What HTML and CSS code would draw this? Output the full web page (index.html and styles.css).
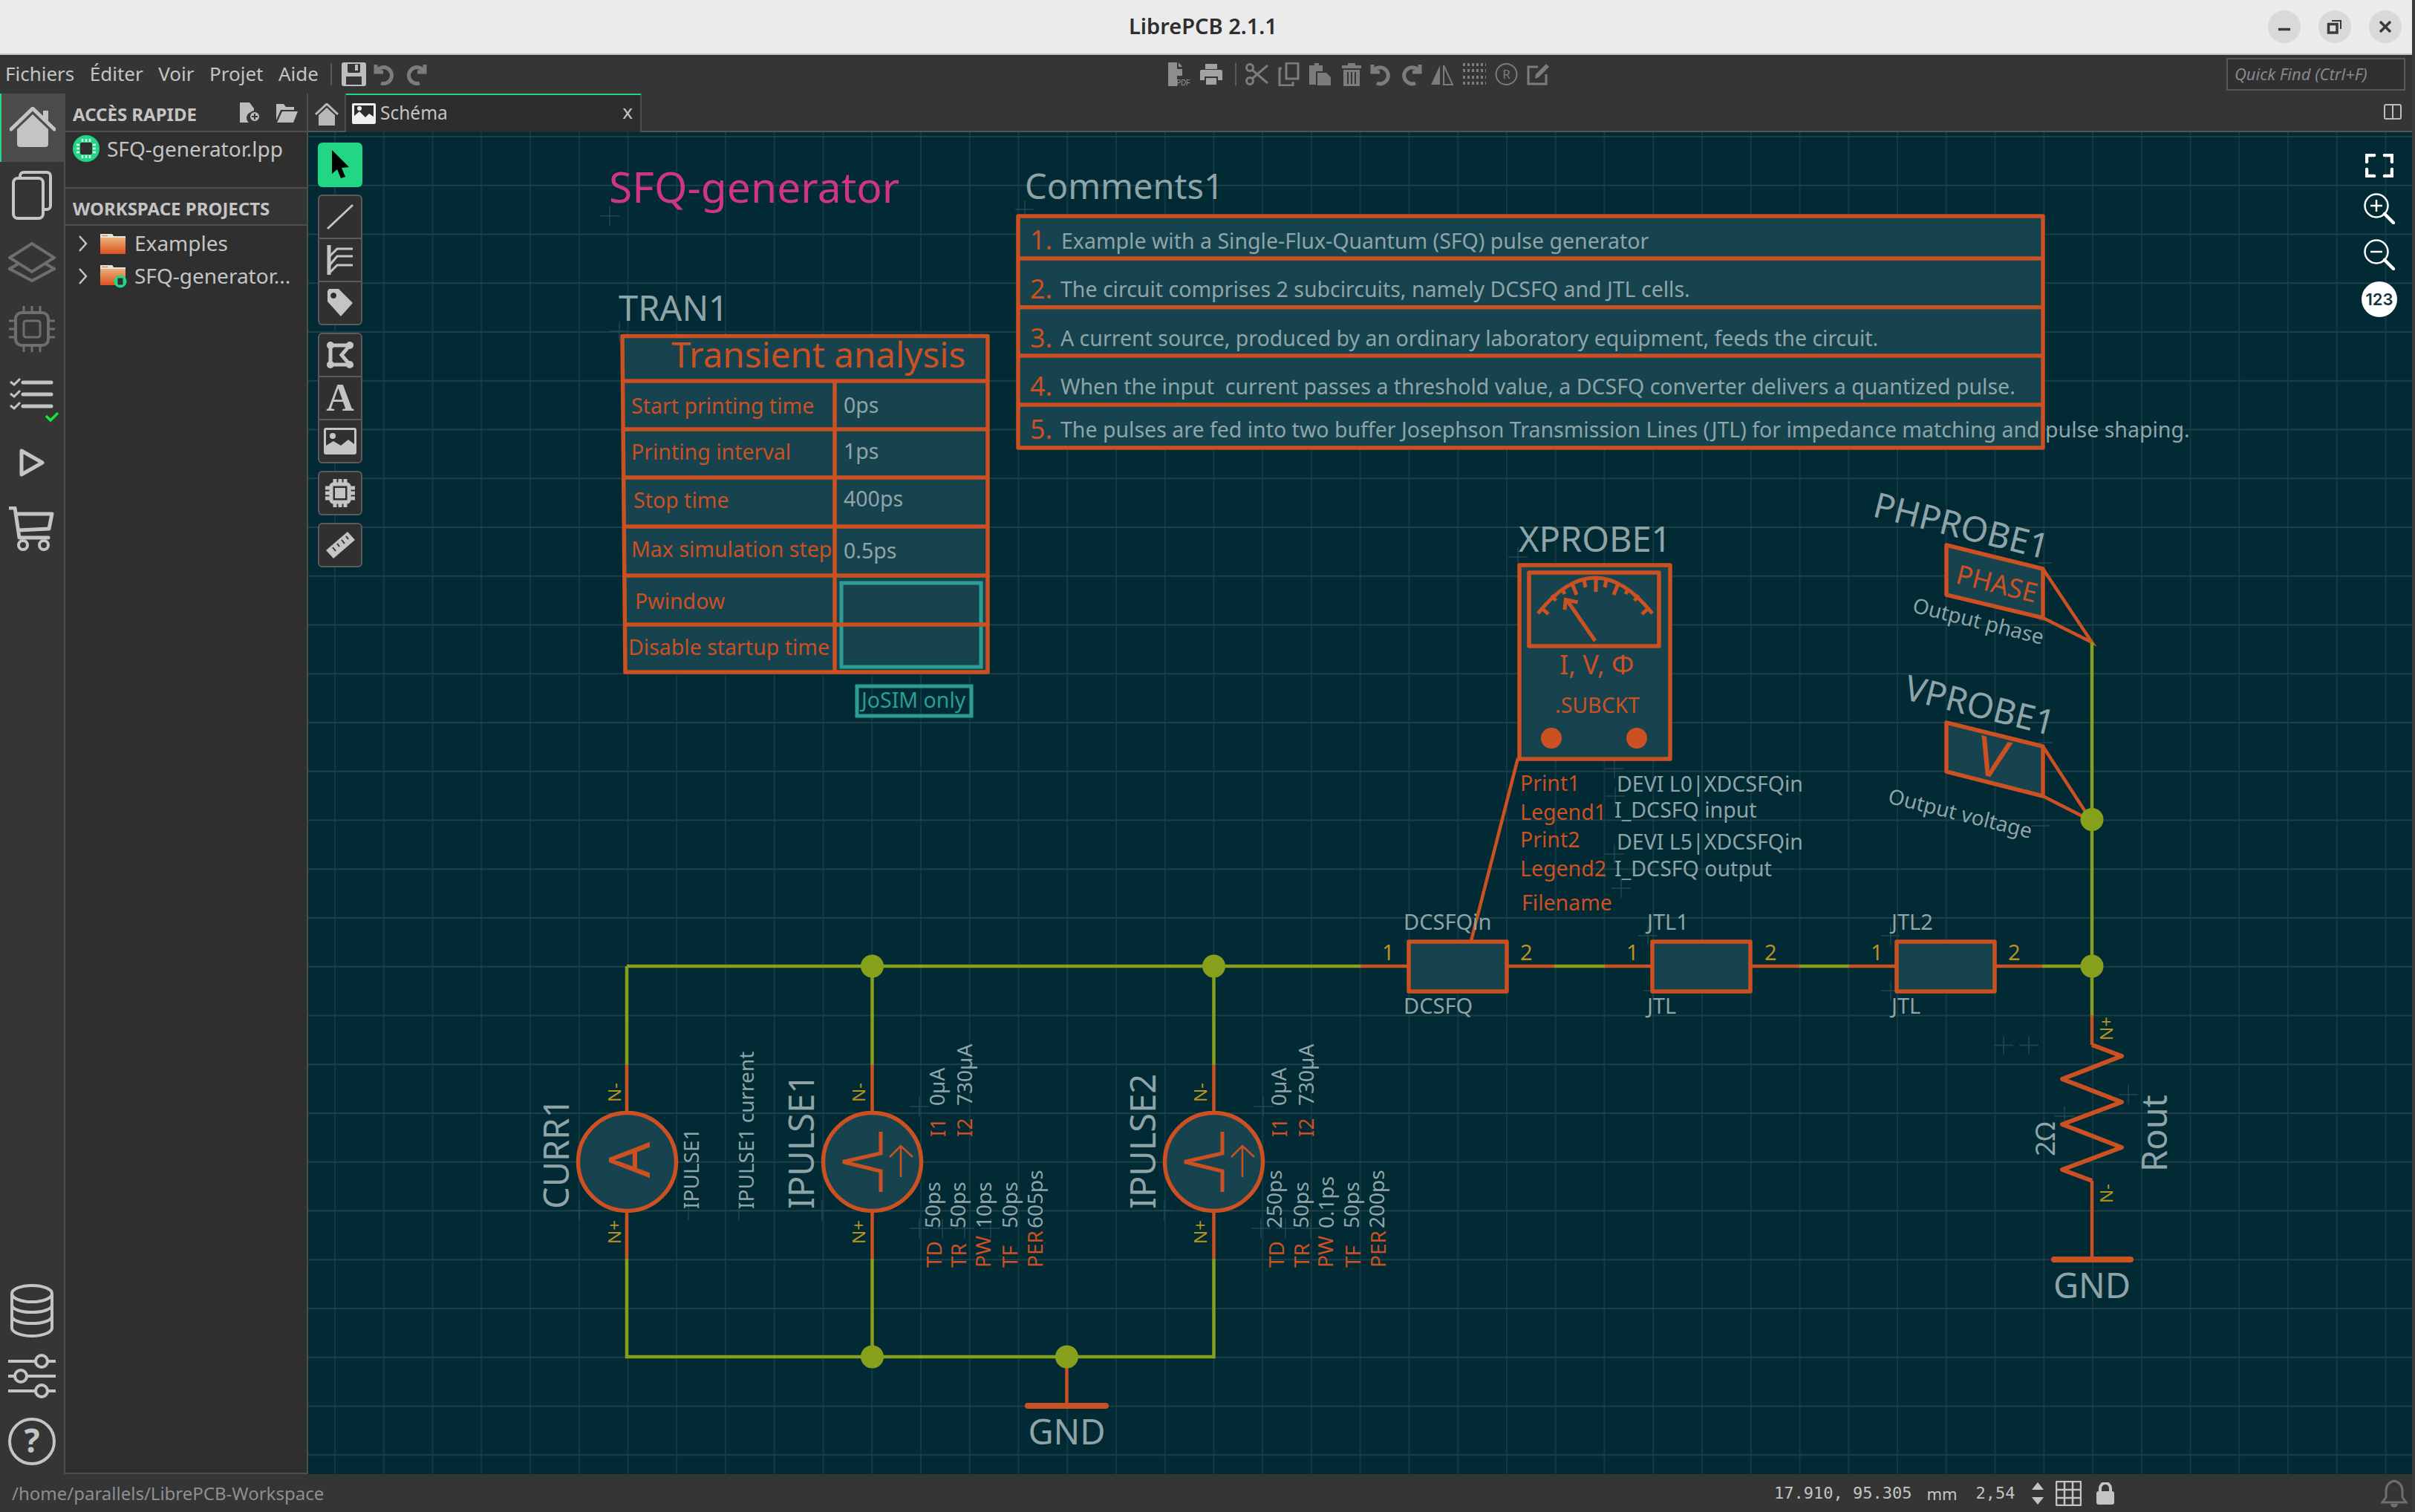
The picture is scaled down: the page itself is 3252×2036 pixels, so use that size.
FILE: index.html
```html
<!DOCTYPE html>
<html lang="fr">
<head>
<meta charset="utf-8">
<title>LibrePCB 2.1.1</title>
<link rel="stylesheet" href="styles.css">
</head>
<body>
<div class="app">
  <header class="titlebar">
    <span class="title">LibrePCB 2.1.1</span>
    <div class="winbtns">
      <span class="winbtn"><svg width="22" height="22" viewBox="0 0 22 22"><path d="M3 14.5H19" class="wb"/></svg></span>
      <span class="winbtn"><svg width="24" height="24" viewBox="0 0 24 24"><path d="M3.5 8.5H15V20H3.5Z" class="wb"/><path d="M8 4H20V15" class="wb thin"/></svg></span>
      <span class="winbtn"><svg width="24" height="24" viewBox="0 0 24 24"><path d="M5 5L19 19M19 5L5 19" class="wb"/></svg></span>
    </div>
  </header>

  <nav class="menubar">
    <div class="menus">
      <span>Fichiers</span><span>Éditer</span><span>Voir</span><span>Projet</span><span>Aide</span>
    </div>
    <i class="sep sep-a"></i>
    <div class="tb tb-left">
      <svg class="lit" width="33" height="32" viewBox="0 0 33 32"><path fill-rule="evenodd" d="M3 0H30a3 3 0 0 1 3 3V29a3 3 0 0 1-3 3H3a3 3 0 0 1-3-3V3a3 3 0 0 1 3-3ZM8 2V12a2 2 0 0 0 2 2H23a2 2 0 0 0 2-2V2ZM18 3V11H22V3ZM6 19V30H27V19Z"/></svg>
      <svg class="dim" width="31" height="32" viewBox="0 0 31 32"><path d="M3 3V13H13M4 12A11 11 0 1 1 10 28" class="st thick"/></svg>
      <svg class="dim" width="31" height="32" viewBox="0 0 31 32"><path d="M28 3V13H18M27 12A11 11 0 1 0 21 28" class="st thick"/></svg>
    </div>
    <div class="tb tb-center">
      <span class="pdfic"><svg class="lit2" width="32" height="32" viewBox="0 0 32 32"><path d="M1 0H13V9H20V18H13V32H1Z"/><path d="M15 0L20 6H15Z"/></svg><span class="pdf">PDF</span></span>
      <svg class="lit" width="32" height="32" viewBox="0 0 32 32"><path fill-rule="evenodd" d="M8 2H24V9H8ZM3 10H29a2 2 0 0 1 2 2V24H25V19H7V24H1V12a2 2 0 0 1 2-2ZM9 21H23V30H9Z"/></svg>
      <i class="sep sep-b"></i>
      <svg class="dim" width="32" height="32" viewBox="0 0 32 32"><circle cx="6" cy="7" r="4.500" class="st"/><circle cx="6" cy="25" r="4.500" class="st"/><path d="M9 10L30 28M9 22L30 4" class="st"/></svg>
      <svg class="dim" width="30" height="32" viewBox="0 0 30 32"><path d="M11 1H27V22H11Z M5 8H2V31H20V26" class="st"/></svg>
      <svg class="dim" width="32" height="32" viewBox="0 0 32 32"><path d="M1 4H8V1H14V4H19V12H10V30H1Z"/><path d="M12 14H24L30 20V31H12Z"/></svg>
      <svg class="dim" width="28" height="32" viewBox="0 0 28 32"><path fill-rule="evenodd" d="M1 4H9V1H19V4H27V8H1ZM3 10H25V32H3ZM8 13V29H10V13ZM13 13V29H15V13ZM18 13V29H20V13Z"/></svg>
      <svg class="dim" width="29" height="32" viewBox="0 0 29 32"><path d="M3 3V13H13M4 12A11 11 0 1 1 9 28" class="st thick"/></svg>
      <svg class="dim" width="29" height="32" viewBox="0 0 29 32"><path d="M26 3V13H16M25 12A11 11 0 1 0 20 28" class="st thick"/></svg>
      <svg class="dim" width="31" height="32" viewBox="0 0 31 32"><path d="M13 4V30H1Z"/><path d="M18 4V30H30Z" class="st thin"/></svg>
      <svg class="dim" width="33" height="32" viewBox="0 0 33 32"><path d="M1 3H32M1 11H32M1 20H32M1 28H32" class="dots"/></svg>
      <svg class="dim" width="31" height="32" viewBox="0 0 31 32"><circle cx="15.500" cy="16" r="14" class="st thin"/><text x="15.500" y="22" class="rtxt">R</text></svg>
      <svg class="dim" width="31" height="32" viewBox="0 0 31 32"><path d="M26 16V29H2V6H15" class="st"/><path d="M11 22L12 16L26 2L30 6L16 20Z"/></svg>
    </div>
    <div class="quickfind">Quick Find (Ctrl+F)</div>
  </nav>

  <div class="main">
    <aside class="rail">
      <div class="railitem active"><svg width="62" height="56" viewBox="0 0 62 56"><path d="M2 30L31 2L60 30" class="rs round"/><path d="M45 5H52V19L45 13Z" class="rf"/><path d="M10 30L31 10L52 30V50a4 4 0 0 1-4 4H14a4 4 0 0 1-4-4Z" class="rf"/></svg></div>
      <div class="railitem"><svg width="54" height="66" viewBox="0 0 54 66"><rect x="2" y="10" width="40" height="54" rx="6" class="rs"/><path d="M11 9V7a5 5 0 0 1 5-5H47a5 5 0 0 1 5 5V47a5 5 0 0 1-5 5H43" class="rs"/></svg></div>
      <div class="railitem dimrail"><svg width="64" height="54" viewBox="0 0 64 54"><path d="M32 2L62 21L32 40L2 21Z" class="rs"/><path d="M14 29L2 36L32 52L62 36L50 29" class="rs"/></svg></div>
      <div class="railitem dimrail"><svg width="64" height="64" viewBox="0 0 64 64"><rect x="10" y="10" width="44" height="44" rx="8" class="rs"/><rect x="21" y="21" width="22" height="22" rx="3" class="rs thinner"/><path d="M21 1V9M32 1V9M43 1V9M21 55V63M32 55V63M43 55V63M1 21H9M1 32H9M1 43H9M55 21H63M55 32H63M55 43H63" class="rs thinner"/></svg></div>
      <div class="railitem checks"><svg width="70" height="60" viewBox="0 0 70 60"><path d="M1 5L6 9L14 1M1 21L6 25L14 17M1 37L6 41L14 33" class="rs thinner"/><path d="M18 6H56M18 22H56M18 38H56" class="rs round"/><path d="M49 51L55 57L65 47" class="okc"/></svg></div>
      <div class="railitem"><svg width="34" height="38" viewBox="0 0 34 38"><path d="M3 3V35L31 19Z" class="rs round"/></svg></div>
      <div class="railitem"><svg width="62" height="62" viewBox="0 0 62 62"><path d="M1 2H8L14 42H53M10 10H58L54 30L13 32" class="rs round"/><circle cx="19" cy="52" r="6" class="rs"/><circle cx="47" cy="52" r="6" class="rs"/></svg></div>
      <div class="railspacer"></div>
      <div class="railitem low"><svg width="60" height="74" viewBox="0 0 60 74"><ellipse cx="30" cy="14" rx="27" ry="11" class="rs"/><path d="M3 14V60C3 66 15 71 30 71S57 66 57 60V14M3 29C3 35 15 39 30 39S57 35 57 29M3 44C3 50 15 54 30 54S57 50 57 44" class="rs"/></svg></div>
      <div class="railitem low"><svg width="64" height="60" viewBox="0 0 64 60"><path d="M0 10H36M54 10H64M0 30H8M26 30H64M0 50H36M54 50H64" class="rs"/><circle cx="45" cy="10" r="8" class="rs"/><circle cx="17" cy="30" r="8" class="rs"/><circle cx="45" cy="50" r="8" class="rs"/></svg></div>
      <div class="railitem low"><svg width="64" height="64" viewBox="0 0 64 64"><circle cx="32" cy="32" r="30" class="rs"/><text x="32" y="47" class="qm">?</text></svg></div>
    </aside>

    <section class="panel">
      <div class="panelhead first">
        <span>ACCÈS RAPIDE</span>
        <svg class="phi" width="30" height="27" viewBox="0 0 30 27"><path d="M1 0H14L20 8V13A8 8 0 0 0 13 27H1Z"/><circle cx="21" cy="19" r="7" class="cut"/><path d="M21 15V23M17 19H25" class="cutl"/></svg>
        <svg class="phi" width="30" height="27" viewBox="0 0 30 27"><path d="M1 2H11L14 6H25V10H7L1 24Z"/><path d="M9 12H30L24 27H2Z"/></svg>
      </div>
      <div class="filerow">
        <svg width="36" height="36" viewBox="0 0 36 36"><circle cx="18" cy="18" r="18" class="logo"/><rect x="10" y="10" width="16" height="16" rx="2" class="logoin"/><path d="M13 5V9M18 5V9M23 5V9M13 27V31M18 27V31M23 27V31M5 13H9M5 18H9M5 23H9M27 13H31M27 18H31M27 23H31" class="logopin"/></svg>
        <span>SFQ-generator.lpp</span>
      </div>
      <div class="panelhead second"><span>WORKSPACE PROJECTS</span></div>
      <div class="tree">
        <div class="treerow">
          <svg width="14" height="22" viewBox="0 0 14 22"><path d="M2 1L11 11L2 21" class="chev"/></svg>
          <svg width="34" height="28" viewBox="0 0 34 28"><use href="#folder"/></svg>
          <span>Examples</span>
        </div>
        <div class="treerow">
          <svg width="14" height="22" viewBox="0 0 14 22"><path d="M2 1L11 11L2 21" class="chev"/></svg>
          <svg width="36" height="32" viewBox="0 0 36 32"><use href="#folder"/><circle cx="27" cy="23" r="8.500" class="logo"/><rect x="23.500" y="18.500" width="7" height="9" rx="1" class="logoin"/></svg>
          <span class="shift">SFQ-generator...</span>
        </div>
      </div>
      <svg class="defs" width="0" height="0"><defs>
        <linearGradient id="fg" x1="0" y1="0" x2="0" y2="1"><stop offset="0" stop-color="#f2c48c"/><stop offset="1" stop-color="#d9521f"/></linearGradient>
        <g id="folder"><path d="M0 1H16L18 4H34V28H0Z" fill="url(#fg)"/><path d="M0 1H16L18 4H34V6H0Z" fill="#e8e3da"/><path d="M2 3H10V4H2Z" fill="#e2762e"/></g>
      </defs></svg>
    </section>

    <section class="workspace">
      <div class="tabbar">
        <div class="hometab"><svg width="32" height="30" viewBox="0 0 32 30"><path d="M1 15L16 1L31 15" class="tabstroke"/><path d="M5 16L16 6L27 16V30H5Z" class="tabfill"/></svg></div>
        <div class="tab">
          <svg width="32" height="28" viewBox="0 0 32 28"><path fill-rule="evenodd" class="tabwhite" d="M2 0H30a2 2 0 0 1 2 2V26a2 2 0 0 1-2 2H2a2 2 0 0 1-2-2V2a2 2 0 0 1 2-2ZM3 3V17L10 11L18 19L23 14L29 18V3Z"/><circle cx="10" cy="7" r="3" class="tabwhite"/></svg>
          <span class="tabname">Schéma</span>
          <span class="tabclose">x</span>
        </div>
        <svg class="split" width="24" height="21" viewBox="0 0 24 21"><rect x="1" y="1" width="22" height="19" rx="2" class="splitl"/><path d="M12 1V20" class="splitl"/></svg>
      </div>

      <div class="canvas">
        <svg class="sheet" width="2833" height="1807" viewBox="415 178 2833 1807">
          <path class="cross" d="M808 290.700H834M821 278V304M821 446H847M834 433V459M1124 527H1150M1137 514V540M1124 588H1150M1137 575V601M1124 653.500H1150M1137 641V666M1124 723H1150M1137 710V736M1124 785H1150M1137 772V798M1124 851H1150M1137 838V864M1367 282H1392M1380 270V295M1416 304H1442M1429 291V317M1416 370H1442M1429 357V383M1416 435H1442M1429 422V448M1416 501H1442M1429 488V514M1416 559H1442M1429 546V572M2031 750H2057M2044 737V763M2161 1035H2187M2174 1022V1048M2162 1072H2188M2175 1060V1085M2161 1150H2187M2174 1137V1163M2170 1196H2196M2183 1183V1209M2206 1260H2232M2219 1247V1273M2533 1260H2558M2546 1247V1273M2213 1334H2239M2226 1321V1347M2533 1334H2558M2546 1321V1347M2685 1407.500H2711M2698 1395V1420M2719 1407.500H2745M2732 1395V1420M2853 1474H2879M2866 1461V1487M2767 1503H2793M2780 1490V1516M767 1630H793M780 1617V1643M914 1630H940M927 1617V1643M982 1630H1008M995 1617V1643M1094 1630H1120M1107 1617V1643M1555 1630H1581M1568 1617V1643M1225 1654H1251M1238 1641V1667M1256 1654H1282M1269 1641V1667M1286 1654H1312M1299 1641V1667M1321 1654H1347M1334 1641V1667M1225 1490H1251M1238 1477V1503M1688 1490H1714M1701 1477V1503M1685 1654H1711M1698 1641V1667M1718 1654H1744M1731 1641V1667M1752 1654H1778M1765 1641V1667M2745 758H2763M2745 835H2763M2745 1000H2763M2735 1112H2760"/>

          <text x="820" y="273" class="t pink f56">SFQ-generator</text>
          <text x="1380" y="268" class="t g f47">Comments1</text>

          <rect x="1371" y="291" width="1380" height="312" class="sym"/>
          <path d="M1371 348H2751M1371 413.700H2751M1371 479H2751M1371 545H2751" class="sym"/>
          <text x="1387" y="336" class="t o f36">1.</text>
          <text x="1387" y="402" class="t o f36">2.</text>
          <text x="1387" y="468" class="t o f36">3.</text>
          <text x="1387" y="533" class="t o f36">4.</text>
          <text x="1387" y="591" class="t o f36">5.</text>
          <text x="1429" y="335" class="t g f29">Example with a Single-Flux-Quantum (SFQ) pulse generator</text>
          <text x="1428" y="400" class="t g f29">The circuit comprises 2 subcircuits, namely DCSFQ and JTL cells.</text>
          <text x="1428" y="466" class="t g f29">A current source, produced by an ordinary laboratory equipment, feeds the circuit.</text>
          <text x="1428" y="531" class="t g f29 pre">When the input  current passes a threshold value, a DCSFQ converter delivers a quantized pulse.</text>
          <text x="1428" y="589" class="t g f29">The pulses are fed into two buffer Josephson Transmission Lines (JTL) for impedance matching and pulse shaping.</text>

          <text x="833" y="432" class="t g f46">TRAN1</text>
          <path d="M838 452.500H1330V905H842Z" class="sym"/>
          <rect x="1133" y="785" width="188" height="113" class="teal"/>
          <path d="M839 513H1330M840 578H1330M840 643H1330M841 709H1330M841 775H1330M842 841H1330M1124 513V905" class="sym"/>
          <text x="904" y="495" class="t o f49">Transient analysis</text>
          <text x="850" y="557" class="t o f30">Start printing time</text>
          <text x="850" y="619" class="t o f30">Printing interval</text>
          <text x="853" y="684" class="t o f30">Stop time</text>
          <text x="850" y="750" class="t o f30">Max simulation step</text>
          <text x="855" y="820" class="t o f30">Pwindow</text>
          <text x="846" y="882" class="t o f30">Disable startup time</text>
          <text x="1136" y="556" class="t g f30">0ps</text>
          <text x="1136" y="618" class="t g f30">1ps</text>
          <text x="1136" y="682" class="t g f30">400ps</text>
          <text x="1136" y="752" class="t g f30">0.5ps</text>
          <rect x="1154" y="924" width="154" height="40" class="tealbox"/>
          <text x="1160" y="953" class="t tl f30">JoSIM only</text>

          <text x="2045" y="743" class="t g f46">XPROBE1</text>
          <rect x="2046" y="761" width="203" height="261" class="sym"/>
          <rect x="2059" y="771" width="175" height="99" class="sym"/>
          <path d="M2071 826Q2148 730 2225 826M2149 779V797M2133 781l2 10M2117 786l6 15M2103 792l4 8M2090 801l5 8M2075 818l10 9M2163 781l-2 10M2179 786l-6 15M2193 792l-4 8M2206 801l-5 8M2221 818l-10 9M2148 863L2110 808M2107 821L2108.400 807.600L2124.600 811" class="thin-sym"/>
          <text x="2100" y="908" class="t o f36">I, V, Φ</text>
          <text x="2094" y="960" class="t o f29">.SUBCKT</text>
          <circle cx="2089" cy="994" r="14" class="dot"/>
          <circle cx="2204" cy="994" r="14" class="dot"/>
          <path d="M2044 1021L1981 1267" class="owire"/>
          <text x="2047" y="1065" class="t o f30">Print1</text>
          <text x="2047" y="1104" class="t o f30">Legend1</text>
          <text x="2047" y="1141" class="t o f30">Print2</text>
          <text x="2047" y="1180" class="t o f30">Legend2</text>
          <text x="2049" y="1226" class="t o f30">Filename</text>
          <text x="2177" y="1066" class="t g f30">DEVI L0|XDCSFQin</text>
          <text x="2174" y="1101" class="t g f30">I_DCSFQ input</text>
          <text x="2177" y="1144" class="t g f30">DEVI L5|XDCSFQin</text>
          <text x="2174" y="1180" class="t g f30">I_DCSFQ output</text>

          <text transform="translate(2520 695) rotate(14)" class="t g f46">PHPROBE1</text>
          <path d="M2621 734L2751 766V832L2621 801Z" class="sym"/>
          <path d="M2751 766L2817 865L2751 832" class="owire"/>
          <text transform="translate(2632 785) rotate(14)" class="t o f36">PHASE</text>
          <text transform="translate(2574 824) rotate(14)" class="t g f28">Output phase</text>
          <text transform="translate(2562 941) rotate(14)" class="t g f46">VPROBE1</text>
          <path d="M2621 973L2751 1005V1072L2621 1039Z" class="sym"/>
          <path d="M2751 1005L2812 1099M2751 1072L2812 1103" class="owire"/>
          <text transform="translate(2656 1040) rotate(14)" class="t o f60">V</text>
          <text transform="translate(2541 1081) rotate(14)" class="t g f28">Output voltage</text>

          <path d="M2817 865V1367M844 1301H1832M2093 1301H2161M2423 1301H2490M2750 1301H2817M844 1301V1434M844 1695V1827H1634.500V1695M1174.500 1301V1434M1634.500 1301V1434M1174.500 1695V1827M1436.500 1827V1840" class="wire"/>
          <path d="M1832 1301H1897M2030 1301H2093M2161 1301H2225M2357 1301H2423M2490 1301H2554M2687 1301H2750M2817 1367V1407M2817 1590V1695M844 1434V1497M844 1632V1695M1174.500 1434V1497M1174.500 1632V1695M1634.500 1434V1497M1634.500 1632V1695M1436.500 1840V1893" class="owire"/>

          <rect x="1897" y="1268" width="132" height="67" class="sym"/>
          <rect x="2225" y="1268" width="132" height="67" class="sym"/>
          <rect x="2554" y="1268" width="132" height="67" class="sym"/>
          <text x="1890" y="1252" class="t g f27">DCSFQin</text>
          <text x="1890" y="1365" class="t g f27">DCSFQ</text>
          <text x="2218" y="1252" class="t g f27">JTL1</text>
          <text x="2218" y="1365" class="t g f27">JTL</text>
          <text x="2547" y="1252" class="t g f27">JTL2</text>
          <text x="2547" y="1365" class="t g f27">JTL</text>
          <text x="1861" y="1293" class="t y f27">1</text>
          <text x="2047" y="1293" class="t y f27">2</text>
          <text x="2190" y="1293" class="t y f27">1</text>
          <text x="2376" y="1293" class="t y f27">2</text>
          <text x="2519" y="1293" class="t y f27">1</text>
          <text x="2704" y="1293" class="t y f27">2</text>

          <circle cx="2817" cy="1103.500" r="15.500" class="node"/>
          <circle cx="2817" cy="1301" r="15.500" class="node"/>
          <circle cx="1174.500" cy="1301" r="15.500" class="node"/>
          <circle cx="1634.500" cy="1301" r="15.500" class="node"/>
          <circle cx="1174.500" cy="1827" r="15.500" class="node"/>
          <circle cx="1436.500" cy="1827" r="15.500" class="node"/>

          <path d="M2817 1407L2857 1422L2777 1453L2857 1484L2777 1514L2857 1545L2777 1575L2817 1590" class="zig"/>
          <path d="M2766 1696H2869M1384 1893H1489" class="bar"/>
          <text x="2817" y="1748" class="t g f46 mid">GND</text>
          <text x="1436.500" y="1945" class="t g f46 mid">GND</text>
          <text transform="translate(2845 1401) rotate(-90)" class="t y f24">N+</text>
          <text transform="translate(2845 1620) rotate(-90)" class="t y f24">N-</text>
          <text transform="translate(2767 1557) rotate(-90)" class="t g f36">2Ω</text>
          <text transform="translate(2918 1578) rotate(-90)" class="t g f44">Rout</text>

          <circle cx="844.500" cy="1564.500" r="66" class="sym"/>
          <circle cx="1174.500" cy="1564.500" r="66" class="sym"/>
          <circle cx="1634.500" cy="1564.500" r="66" class="sym"/>
          <text transform="translate(875 1562) rotate(-90)" class="t o f76 mid">A</text>
          <path d="M1186 1524V1553L1135 1564.500L1186 1577V1605M1646 1524V1553L1595 1564.500L1646 1577V1605" class="pulse"/>
          <path d="M1213 1585V1543M1198 1558L1213 1543L1229 1558M1673 1585V1543M1658 1558L1673 1543L1689 1558" class="arrow"/>

          <text transform="translate(766 1628) rotate(-90)" class="t g f46">CURR1</text>
          <text transform="translate(1096 1628) rotate(-90)" class="t g f46">IPULSE1</text>
          <text transform="translate(1556 1628) rotate(-90)" class="t g f46">IPULSE2</text>
          <text transform="translate(941 1628) rotate(-90)" class="t g f28">IPULSE1</text>
          <text transform="translate(1015 1628) rotate(-90)" class="t g f28">IPULSE1 current</text>

          <text transform="translate(836 1484) rotate(-90)" class="t y f24">N-</text>
          <text transform="translate(836 1675) rotate(-90)" class="t y f24">N+</text>
          <text transform="translate(1165 1484) rotate(-90)" class="t y f24">N-</text>
          <text transform="translate(1165 1675) rotate(-90)" class="t y f24">N+</text>
          <text transform="translate(1625 1484) rotate(-90)" class="t y f24">N-</text>
          <text transform="translate(1625 1675) rotate(-90)" class="t y f24">N+</text>

          <text transform="translate(1273 1531) rotate(-90)" class="t o f28">I1</text>
          <text transform="translate(1309 1531) rotate(-90)" class="t o f28">I2</text>
          <text transform="translate(1272 1489) rotate(-90)" class="t g f28">0µA</text>
          <text transform="translate(1309 1489) rotate(-90)" class="t g f28">730µA</text>
          <text transform="translate(1268 1707) rotate(-90)" class="t o f28">TD</text>
          <text transform="translate(1301 1707) rotate(-90)" class="t o f28">TR</text>
          <text transform="translate(1334 1707) rotate(-90)" class="t o f28">PW</text>
          <text transform="translate(1370 1707) rotate(-90)" class="t o f28">TF</text>
          <text transform="translate(1404 1707) rotate(-90)" class="t o f28">PER</text>
          <text transform="translate(1266 1654) rotate(-90)" class="t g f28">50ps</text>
          <text transform="translate(1300 1654) rotate(-90)" class="t g f28">50ps</text>
          <text transform="translate(1335 1654) rotate(-90)" class="t g f28">10ps</text>
          <text transform="translate(1370 1654) rotate(-90)" class="t g f28">50ps</text>
          <text transform="translate(1404 1654) rotate(-90)" class="t g f28">605ps</text>

          <text transform="translate(1733 1531) rotate(-90)" class="t o f28">I1</text>
          <text transform="translate(1769 1531) rotate(-90)" class="t o f28">I2</text>
          <text transform="translate(1732 1489) rotate(-90)" class="t g f28">0µA</text>
          <text transform="translate(1769 1489) rotate(-90)" class="t g f28">730µA</text>
          <text transform="translate(1729 1707) rotate(-90)" class="t o f28">TD</text>
          <text transform="translate(1763 1707) rotate(-90)" class="t o f28">TR</text>
          <text transform="translate(1795 1707) rotate(-90)" class="t o f28">PW</text>
          <text transform="translate(1832 1707) rotate(-90)" class="t o f28">TF</text>
          <text transform="translate(1866 1707) rotate(-90)" class="t o f28">PER</text>
          <text transform="translate(1726 1654) rotate(-90)" class="t g f28">250ps</text>
          <text transform="translate(1762 1654) rotate(-90)" class="t g f28">50ps</text>
          <text transform="translate(1796 1654) rotate(-90)" class="t g f28">0.1ps</text>
          <text transform="translate(1830 1654) rotate(-90)" class="t g f28">50ps</text>
          <text transform="translate(1864 1654) rotate(-90)" class="t g f28">200ps</text>
        </svg>

        <div class="tools">
          <div class="toolgroup green"><div class="tool"><svg width="26" height="40" viewBox="0 0 26 40"><path d="M2 0L25 23L15 24L20 36L14 38L9 26L2 32Z" class="blk"/></svg></div></div>
          <div class="toolgroup">
            <div class="tool"><svg width="36" height="36" viewBox="0 0 36 36"><path d="M1 34L35 2" class="ts"/></svg></div>
            <div class="tool"><svg width="36" height="40" viewBox="0 0 36 40"><path d="M3 0V40" class="ts wide"/><path d="M3 16L14 5H35M3 28L14 15H35M3 38L14 27H35" class="ts"/></svg></div>
            <div class="tool"><svg width="36" height="38" viewBox="0 0 36 38"><path fill-rule="evenodd" class="tf" d="M3 0H16L35 19L19 37L1 17V3ZM9 5a4 4 0 1 0 .100 0Z"/></svg></div>
          </div>
          <div class="toolgroup">
            <div class="tool"><svg width="38" height="38" viewBox="0 0 38 38"><path d="M6 6H32L21 19L32 32H6Z" class="ts wide"/><circle cx="6" cy="6" r="5" class="tf"/><circle cx="32" cy="6" r="5" class="tf"/><circle cx="6" cy="32" r="5" class="tf"/><circle cx="32" cy="32" r="5" class="tf"/></svg></div>
            <div class="tool"><span class="ta">A</span></div>
            <div class="tool"><svg width="44" height="36" viewBox="0 0 44 36"><path fill-rule="evenodd" class="tf" d="M3 0H41a3 3 0 0 1 3 3V33a3 3 0 0 1-3 3H3a3 3 0 0 1-3-3V3a3 3 0 0 1 3-3ZM3 3V24L13 18L23 24L33 16L41 22V3Z"/><circle cx="12" cy="11" r="4" class="tf"/></svg></div>
          </div>
          <div class="toolgroup"><div class="tool"><svg width="42" height="40" viewBox="0 0 42 40"><rect x="9" y="8" width="24" height="24" rx="3" class="ts wide"/><rect x="14" y="13" width="14" height="14" class="tf"/><path d="M14 1V7M21 1V7M28 1V7M14 33V39M21 33V39M28 33V39M1 13H8M1 20H8M1 27H8M34 13H41M34 20H41M34 27H41" class="ts wide"/></svg></div></div>
          <div class="toolgroup"><div class="tool"><svg width="42" height="38" viewBox="0 0 42 38"><path class="tf" d="M2 26L31 1L41 12L12 37Z"/><path d="M11 22L15 27M17 17L20 21M23 12L27 17M29 7L32 11" class="rulecut"/></svg></div></div>
        </div>

        <div class="viewctl">
          <svg width="38" height="32" viewBox="0 0 38 32"><path d="M2 11V2H12M26 2H36V11M2 21V30H12M26 30H36V21" class="vw"/></svg>
          <svg width="42" height="42" viewBox="0 0 42 42"><circle cx="17" cy="17" r="15.500" class="vt"/><path d="M9 17H25M17 9V25" class="vt"/><path d="M28 28L40 40" class="vw"/></svg>
          <svg width="42" height="42" viewBox="0 0 42 42"><circle cx="17" cy="17" r="15.500" class="vt"/><path d="M9 17H25" class="vt"/><path d="M28 28L40 40" class="vw"/></svg>
          <span class="badge">123</span>
        </div>
      </div>
    </section>
  </div>

  <footer class="statusbar">
    <span class="path">/home/parallels/LibrePCB-Workspace</span>
    <span class="coord">17.910, 95.305</span>
    <span class="unit">mm</span>
    <span class="coord gridv">2,54</span>
    <svg class="updown" width="16" height="30" viewBox="0 0 16 30"><path d="M8 0L16 10H0ZM8 30L16 20H0Z" class="sf"/></svg>
    <svg class="gridic" width="35" height="34" viewBox="0 0 35 34"><rect x="1" y="1" width="33" height="32" rx="1" class="sl"/><path d="M12 1V33M23 1V33M1 12H34M1 23H34" class="sl"/></svg>
    <svg class="lock" width="26" height="30" viewBox="0 0 26 30"><path d="M6 13V8a7 7 0 0 1 14 0V13" class="sl thick"/><rect x="1" y="12" width="24" height="18" rx="3" class="sf"/></svg>
    <svg class="bell" width="36" height="38" viewBox="0 0 36 38"><path d="M18 2C10 4 7 10 7 16V24L2 31H34L29 24V16C29 10 26 4 18 2Z" class="bl"/><path d="M13 33a5 5 0 0 0 10 0Z" class="bf"/></svg>
  </footer>
</div>
</body>
</html>
```

FILE: styles.css
```css
* { box-sizing: border-box; }
html, body { margin: 0; padding: 0; height: 100%; background: #3c3c3c; overflow: hidden; }
body { font-family: "Noto Sans", sans-serif; color: #c4c4c4; }

.app { width: 3248px; height: 2036px; display: flex; flex-direction: column; background: #353535; }

/* title bar */
.titlebar { height: 74px; flex: none; background: #ebebeb; border-bottom: 2px solid #c4c4c4; display: flex; align-items: center; justify-content: center; position: relative; padding-bottom: 3px; }
.title { font-size: 29px; font-weight: 600; color: #2e2e2e; margin-right: 8px; }
.winbtns { position: absolute; right: 14px; top: 14px; display: flex; gap: 24px; }
.winbtn { width: 44px; height: 44px; border-radius: 50%; background: #d9d9d9; display: flex; align-items: center; justify-content: center; }
.wb { fill: none; stroke: #3a3a3a; stroke-width: 3.5; }
.wb.thin { stroke-width: 2; }

/* menu bar */
.menubar { height: 52px; flex: none; display: flex; align-items: center; padding-left: 7px; background: #353535; }
.menus { display: flex; gap: 20.5px; font-size: 26px; color: #c4c4c4; padding-bottom: 3px; }
.sep { display: block; width: 2px; height: 30px; background: #5c5c5c; flex: none; }
.sep-a { margin: 0 13px 0 16px; }
.sep-b { margin: 0 1px 0 4px; }
.tb { display: flex; align-items: center; }
.tb-left { gap: 10px; }
.tb-center { gap: 11.5px; margin-left: 997px; }
.lit { fill: #c0c0c0; }
.lit2 { fill: #8e8e8e; }
.dim { fill: #7c7c7c; }
.tb svg.lit { fill: #bdbdbd; }
.tb-center svg.lit { fill: #a2a2a2; }
.st { fill: none; stroke: #7c7c7c; stroke-width: 3; }
.st.thin { stroke-width: 2; }
.st.thick { stroke-width: 5; }
.dots { stroke: #7c7c7c; stroke-width: 4; stroke-dasharray: 3 3; fill: none; }
.pdfic { position: relative; display: block; width: 32px; height: 32px; flex: none; }
.pdfic svg { display: block; }
.pdf { position: absolute; left: 12px; bottom: -1px; font-family: "Liberation Sans", sans-serif; font-size: 11px; line-height: 12px; color: #9a9a9a; transform: scaleX(0.85); transform-origin: left bottom; }
.rtxt { font-size: 17px; text-anchor: middle; fill: #7c7c7c; }
.quickfind { margin-left: auto; margin-right: 9px; width: 241px; height: 44px; background: #303030; border: 2px solid #585858; font-size: 22px; font-style: italic; color: #85898e; padding-left: 9px; line-height: 38px; }

/* main row */
.main { flex: 1; min-height: 0; display: flex; }

.rail { width: 88px; flex: none; display: flex; flex-direction: column; background: #353535; border-right: 2px solid #4e4e4e; }
.railitem { height: 90px; flex: none; display: flex; align-items: center; justify-content: center; }
.railitem.active { height: 92px; background: #4c4c4c; border-left: 2px solid #22d685; }
.railitem.checks { padding: 12px 0 0 10px; }
.railitem.low { height: 88px; }
.railspacer { flex: 1; }
.rs { fill: none; stroke: #c4c4c4; stroke-width: 4; }
.rs.round { stroke-linecap: round; stroke-linejoin: round; stroke-width: 5; }
.rs.thinner { stroke-width: 3; }
.rf { fill: #c4c4c4; }
.dimrail .rs { stroke: #6e6e6e; }
.okc { fill: none; stroke: #14e43c; stroke-width: 3.5; }
.qm { font-size: 44px; font-weight: 700; text-anchor: middle; fill: #c4c4c4; }

.panel { width: 325px; flex: none; background: #2f2f2f; display: flex; flex-direction: column; border-bottom: 2px solid #4e4e4e; }
.panelhead { display: flex; align-items: center; background: #353535; padding-left: 10px; font-size: 24px; font-weight: 700; color: #c4c4c4; flex: none; border-bottom: 2px solid #4e4e4e; }
.panelhead.first { height: 52px; }
.panelhead.first span { margin-right: auto; padding-top: 4px; }
.panelhead.first svg { margin-right: 19px; }
.panelhead.first svg + svg { margin-right: 12px; }
.panelhead.second { height: 52px; border-top: 2px solid #4e4e4e; padding-top: 4px; }
.phi { fill: #bdbdbd; }
.cut { fill: #bdbdbd; stroke: #353535; stroke-width: 2; }
.cutl { stroke: #353535; stroke-width: 2; fill: none; }
.filerow { height: 74px; flex: none; display: flex; align-items: flex-start; gap: 10px; padding: 4px 0 0 10px; font-size: 28px; line-height: 36px; color: #c4c4c4; }
.logo { fill: #22d685; }
.logoin { fill: #2f2f2f; }
.logopin { stroke: #e8f5ee; stroke-width: 2.5; fill: none; }
.tree { padding: 2px 0 0 17px; display: flex; flex-direction: column; font-size: 28px; color: #c4c4c4; }
.treerow { height: 44px; display: flex; align-items: center; gap: 16px; }
.treerow span { margin-left: -4px; padding-bottom: 2px; }
.treerow span.shift { margin-left: -6px; }
.chev { fill: none; stroke: #c4c4c4; stroke-width: 2.5; }
.defs { position: absolute; }

.workspace { flex: 1; min-width: 0; display: flex; flex-direction: column; border-left: 2px solid #4e4e4e; }
.tabbar { height: 52px; flex: none; display: flex; background: #353535; border-bottom: 2px solid #555; align-items: stretch; }
.hometab { width: 51px; display: flex; align-items: center; justify-content: center; border-right: 2px solid #4e4e4e; padding-top: 6px; }
.tabstroke { fill: none; stroke: #b9b9b9; stroke-width: 3; }
.tabfill { fill: #b9b9b9; }
.tab { width: 398px; height: 52px; background: #2d2d2d; border-top: 2px solid #22d685; border-right: 2px solid #4e4e4e; display: flex; align-items: center; padding: 0 10px 0 8px; gap: 6px; }
.tabwhite { fill: #f0f0f0; }
.tabname { font-size: 24.5px; color: #c4c4c4; padding-bottom: 3px; }
.tabclose { margin-left: auto; font-size: 26px; color: #c4c4c4; padding-bottom: 6px; }
.split { margin: 14px 14px 0 auto; }
.splitl { fill: none; stroke: #bdbdbd; stroke-width: 2; }

.canvas { flex: 1; min-height: 0; position: relative; overflow: hidden; background-color: #012a35;
  background-image: linear-gradient(#1d3f48 2px, transparent 2px), linear-gradient(90deg, #143943 2px, transparent 2px);
  background-size: 65.75px 65.75px; background-position: 35px 5px; }
.sheet { position: absolute; inset: 0; display: block; }

.t { font-family: "Noto Sans", sans-serif; }
.pre { white-space: pre; }
.g { fill: #8fa4a7; }
.o { fill: #cb5022; }
.y { fill: #b8921e; }
.tl { fill: #2a9d94; }
.pink { fill: #d0357f; }
.mid { text-anchor: middle; }
.f24 { font-size: 24px; } .f27 { font-size: 29px; } .f28 { font-size: 28px; } .f29 { font-size: 28.5px; }
.f30 { font-size: 28.5px; } .f36 { font-size: 36px; } .f44 { font-size: 47px; } .f46 { font-size: 47px; }
.f47 { font-size: 47px; } .f49 { font-size: 47.5px; } .f56 { font-size: 57px; } .f60 { font-size: 72px; } .f76 { font-size: 76px; }

.sym { fill: #17434f; stroke: #cb5022; stroke-width: 5.5; stroke-linejoin: round; }
.thin-sym { fill: none; stroke: #cb5022; stroke-width: 5; }
.owire { fill: none; stroke: #cb5022; stroke-width: 4.5; }
.wire { fill: none; stroke: #86a01c; stroke-width: 4.5; }
.node { fill: #86a01c; }
.dot { fill: #cb5022; }
.zig { fill: none; stroke: #cb5022; stroke-width: 6; stroke-linejoin: round; }
.bar { fill: none; stroke: #cb5022; stroke-width: 8; stroke-linecap: round; }
.pulse { fill: none; stroke: #cb5022; stroke-width: 5; }
.arrow { fill: none; stroke: #cb5022; stroke-width: 2.5; }
.teal { fill: none; stroke: #2a9d94; stroke-width: 5; }
.tealbox { fill: none; stroke: #2a9d94; stroke-width: 5; }
.cross { fill: none; stroke: #24474f; stroke-width: 1.5; }

.tools { position: absolute; left: 13px; top: 14px; display: flex; flex-direction: column; gap: 10px; width: 60px; }
.toolgroup { background: #303030; border: 2px solid #5a5a5a; border-radius: 6px; display: flex; flex-direction: column; }
.toolgroup.green { background: #22d685; border-color: #22d685; }
.tool { height: 58px; display: flex; align-items: center; justify-content: center; border-top: 2px solid #5a5a5a; }
.tool:first-child { border-top: none; height: 56px; }
.blk { fill: #000; }
.ts { fill: none; stroke: #c4c4c4; stroke-width: 3; }
.ts.wide { stroke-width: 5; }
.tf { fill: #c4c4c4; }
.ta { font-family: "Liberation Serif", serif; font-weight: 700; font-size: 52px; line-height: 54px; color: #c4c4c4; }
.rulecut { fill: none; stroke: #303030; stroke-width: 2; }

.viewctl { position: absolute; right: 14px; top: 29px; width: 60px; display: flex; flex-direction: column; align-items: center; gap: 20.5px; }
.vw { fill: none; stroke: #fff; stroke-width: 4.5; stroke-linecap: round; }
.vt { fill: none; stroke: #fff; stroke-width: 2.5; }
.badge { width: 48px; height: 48px; border-radius: 50%; background: #fff; color: #123540; font-size: 22px; font-weight: 600; text-align: center; line-height: 48px; font-family: "Inter", sans-serif; margin-top: -6px; }

.statusbar { height: 51px; flex: none; display: flex; align-items: center; background: #353535; padding-left: 16px; }
.path { font-size: 24px; color: #8b8f94; width: 2373px; flex: none; }
.coord { font-family: "DejaVu Sans Mono", monospace; font-size: 22px; color: #c4c4c4; }
.unit { margin-left: 20px; font-size: 22px; color: #c4c4c4; }
.gridv { margin-left: 25px; }
.updown { margin-left: 22px; }
.gridic { margin-left: 16px; }
.lock { margin-left: 19px; }
.bell { margin-left: auto; margin-right: 6px; }
.sf { fill: #c4c4c4; }
.sl { fill: none; stroke: #c4c4c4; stroke-width: 2.5; }
.sl.thick { stroke-width: 4; }
.bl { fill: none; stroke: #6e6e6e; stroke-width: 3; }
.bf { fill: #6e6e6e; }
```
